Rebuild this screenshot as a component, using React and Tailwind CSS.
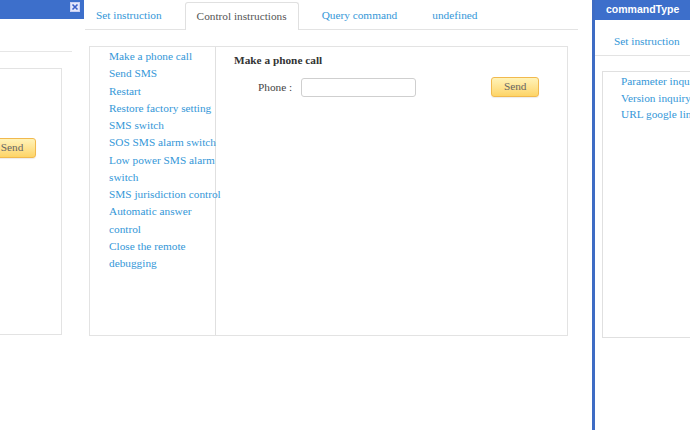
import React from "react";

const serif = { fontFamily: '"Liberation Serif", "Times New Roman", serif' };

function XIcon() {
  return (
    <svg width="10" height="10" viewBox="0 0 10 10">
      <rect x="0.5" y="0.5" width="9" height="9" fill="#e4e7fb" stroke="#c9cff3" />
      <path d="M2.5 2.5 L7.5 7.5 M7.5 2.5 L2.5 7.5" stroke="#3b5fc9" strokeWidth="1.6" />
    </svg>
  );
}

function SendButton({ className = "" }) {
  return (
    <button
      className={
        "h-[20px] w-[48px] shrink-0 rounded-[3px] border border-[#f1b94e] bg-gradient-to-b from-[#fff3b8] to-[#fdd466] text-[11.3px] leading-none text-[#666] shadow-[0_1px_1px_rgba(0,0,0,0.08)] " +
        className
      }
      style={serif}
    >
      Send
    </button>
  );
}

const items = [
  "Make a phone call",
  "Send SMS",
  "Restart",
  "Restore factory setting",
  "SMS switch",
  "SOS SMS alarm switch",
  "Low power SMS alarm switch",
  "SMS jurisdiction control",
  "Automatic answer control",
  "Close the remote debugging",
];

export default function App() {
  return (
    <div className="flex h-[430px] w-[690px] overflow-hidden bg-white" style={serif}>
      {/* left partial panel */}
      <div className="flex w-[85px] shrink-0 flex-col overflow-hidden">
        <div className="flex h-[19px] w-[84px] items-start justify-end bg-[#3d6fcb] pr-[4px] pt-[2px]">
          <XIcon />
        </div>
        <div className="h-[33px] w-[72px] border-b border-[#e6e6e6]" />
        <div className="mt-[16px] flex h-[267px] w-[62px] flex-col border-t border-r border-b border-[#e3e3e3]">
          <div className="mt-[69px] flex justify-end pr-[25px]">
            <SendButton className="h-[18px]" />
          </div>
        </div>
      </div>

      {/* center panel */}
      <div className="flex w-[507px] shrink-0 flex-col">
        <div className="mr-[14px] flex h-[30px] items-end gap-[12px] border-b border-[#e3e3e3] text-[11.3px]">
          <div className="flex h-[27px] items-center px-[11px] text-[#3497d8]">Set instruction</div>
          <div className="relative -mb-px flex h-[28px] items-center rounded-t-[3px] border border-b-0 border-[#e0e0e0] bg-white px-[11px] pb-[1px] text-[#555]">
            Control instructions
          </div>
          <div className="flex h-[27px] items-center px-[11px] text-[#3497d8]">Query command</div>
          <div className="flex h-[27px] items-center px-[12px] text-[#3497d8]">undefined</div>
        </div>
        <div className="ml-[4px] mt-[16px] flex h-[290px] w-[479px] border border-[#e3e3e3]">
          <div className="w-[126px] shrink-0 border-r border-[#e0e0e0] pl-[19px] pt-[1px] text-[11.3px] leading-[17.25px] text-[#3497d8]">
            {items.map((t) => (
              <div key={t} className="w-[114px] whitespace-normal">
                {t}
              </div>
            ))}
          </div>
          <div className="flex flex-1 flex-col pl-[18px]">
            <div className="mt-[5px] text-[11.3px] font-bold leading-[17px] text-[#333]">Make a phone call</div>
            <div className="mt-[8px] flex items-center">
              <span className="ml-[24px] text-[11.3px] text-[#444]">Phone :</span>
              <input className="ml-[9px] h-[19px] w-[115px] rounded-[3px] border border-[#cfcfcf] bg-white outline-none" />
              <SendButton className="ml-[75px]" />
            </div>
          </div>
        </div>
      </div>

      {/* right partial panel */}
      <div className="flex min-w-0 flex-1 flex-col overflow-hidden border-l-[3px] border-[#3e6cc4]">
        <div
          className="flex h-[20px] shrink-0 items-center bg-[#3d6fcb] pl-[11px] text-[10.5px] font-bold text-white"
          style={{ fontFamily: '"Liberation Sans", Arial, sans-serif' }}
        >
          commandType
        </div>
        <div className="flex h-[36px] shrink-0 items-center border-b border-[#e3e3e3] pl-[19px] text-[11.3px] text-[#3497d8]">
          <span className="mt-[8px]">Set instruction</span>
        </div>
        <div className="ml-[7px] mt-[15px] h-[267px] w-[200px] shrink-0 border border-[#e0e0e0] pl-[18px] pt-[1px] text-[11.3px] leading-[16.5px] text-[#3497d8]">
          <div className="whitespace-nowrap">Parameter inquiry</div>
          <div className="whitespace-nowrap">Version inquiry</div>
          <div className="whitespace-nowrap">URL google link</div>
        </div>
      </div>
    </div>
  );
}
